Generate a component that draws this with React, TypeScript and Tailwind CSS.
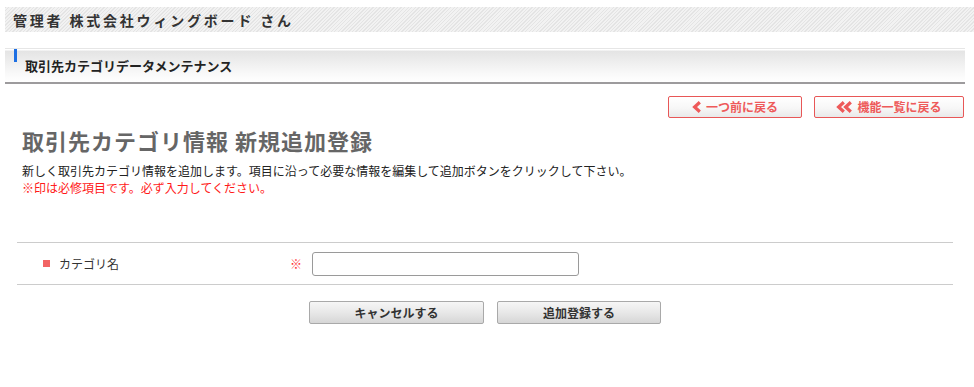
import React from "react"

const font = "font-['Noto_Sans_CJK_JP','Noto_Sans',sans-serif]"

function Chevron({ className }: { className?: string }) {
    return (
        <svg className={className} viewBox="0 0 10 12" width="10" height="12" fill="none">
            <polyline points="7.8,1.2 2.6,6 7.8,10.8" stroke="currentColor" strokeWidth="3.2" strokeLinejoin="miter" />
        </svg>
    )
}

function BackButton({ label, double, width }: { label: string; double?: boolean; width: string }) {
    return (
        <button
            className={`${width} flex h-[22px] items-center justify-center gap-[4px] rounded-[2px] border-[1.5px] border-[#e85757] bg-[linear-gradient(#ffffff,#f7f7f7_55%,#e9e9e9)] text-[12px] font-bold leading-none text-[#ee5a5a]`}
        >
            <span className="flex items-center">
                <Chevron />
                {double ? <Chevron className="-ml-[3px]" /> : null}
            </span>
            <span>{label}</span>
        </button>
    )
}

function GrayButton({ label, width }: { label: string; width: string }) {
    return (
        <button
            className={`${width} h-[23px] rounded-[2px] border border-[#a9a9a9] bg-[linear-gradient(#f6f6f6,#e8e8e8_50%,#d6d6d6)] text-[12px] font-bold leading-none text-[#333]`}
        >
            {label}
        </button>
    )
}

export default function App() {
    return (
        <div className={`${font} h-[387px] w-[974px] overflow-hidden bg-white text-[#333]`}>
            <div className="pl-[5px] pt-[7px]">
                <div className="flex h-[25px] items-center bg-[repeating-linear-gradient(135deg,#e4e4e4_0px,#e4e4e4_1px,#f2f2f2_1px,#f2f2f2_2.5px)] pl-[8px] text-[14px] font-bold leading-none tracking-[0.2em] text-[#333]">
                    管理者 株式会社ウィングボード さん
                </div>
            </div>

            <div className="ml-[5px] mr-[9px] mt-[16px]">
                <div className="flex h-[36px] border-b-2 border-t border-b-[#9d9b9d] border-t-[#e6e6e6] bg-[linear-gradient(#ffffff_0px,#ffffff_1px,#e4e4e4_2px,#f9f9f9_75%,#ffffff)] pl-[9px]">
                    <span className="h-[13px] w-[3px] bg-[#1d6fe3]" />
                    <span className="ml-[8px] mt-[10px] text-[13px] font-bold leading-[14px] text-[#222]">
                        取引先カテゴリデータメンテナンス
                    </span>
                </div>
            </div>

            <div className="mt-[12px] flex justify-end gap-[12px] pr-[10px]">
                <BackButton label="一つ前に戻る" width="w-[134px]" />
                <BackButton label="機能一覧に戻る" double width="w-[150px]" />
            </div>

            <div className="pl-[22px]">
                <h1 className="mt-[10px] text-[22px] font-bold leading-[24px] tracking-[1px] text-[#666]">
                    取引先カテゴリ情報 新規追加登録
                </h1>
                <p className="mt-[10px] text-[12px] leading-[17px] text-[#222]">
                    新しく取引先カテゴリ情報を追加します。項目に沿って必要な情報を編集して追加ボタンをクリックして下さい。
                </p>
                <p className="text-[12px] leading-[17px] text-[#ff1a1a]">※印は必修項目です。必ず入力してください。</p>
            </div>

            <div className="ml-[17px] mr-[21px] mt-[46px]">
                <div className="flex h-[43px] items-center border-y border-[#cccccc]">
                    <div className="flex w-[273px] items-center pl-[26px]">
                        <span className="h-[7px] w-[7px] bg-[#f26464]" />
                        <span className="ml-[9px] text-[12px] leading-none text-[#333]">カテゴリ名</span>
                    </div>
                    <span className="w-[22px] text-[12px] leading-none text-[#ff3333]">※</span>
                    <input
                        type="text"
                        className="h-[24px] w-[267px] rounded-[3px] border border-[#9a9a9a] bg-white px-[4px] text-[12px] outline-none"
                    />
                </div>
            </div>

            <div className="mt-[16px] flex justify-center gap-[13px] pr-[4px]">
                <GrayButton label="キャンセルする" width="w-[175px]" />
                <GrayButton label="追加登録する" width="w-[164px]" />
            </div>
        </div>
    )
}
